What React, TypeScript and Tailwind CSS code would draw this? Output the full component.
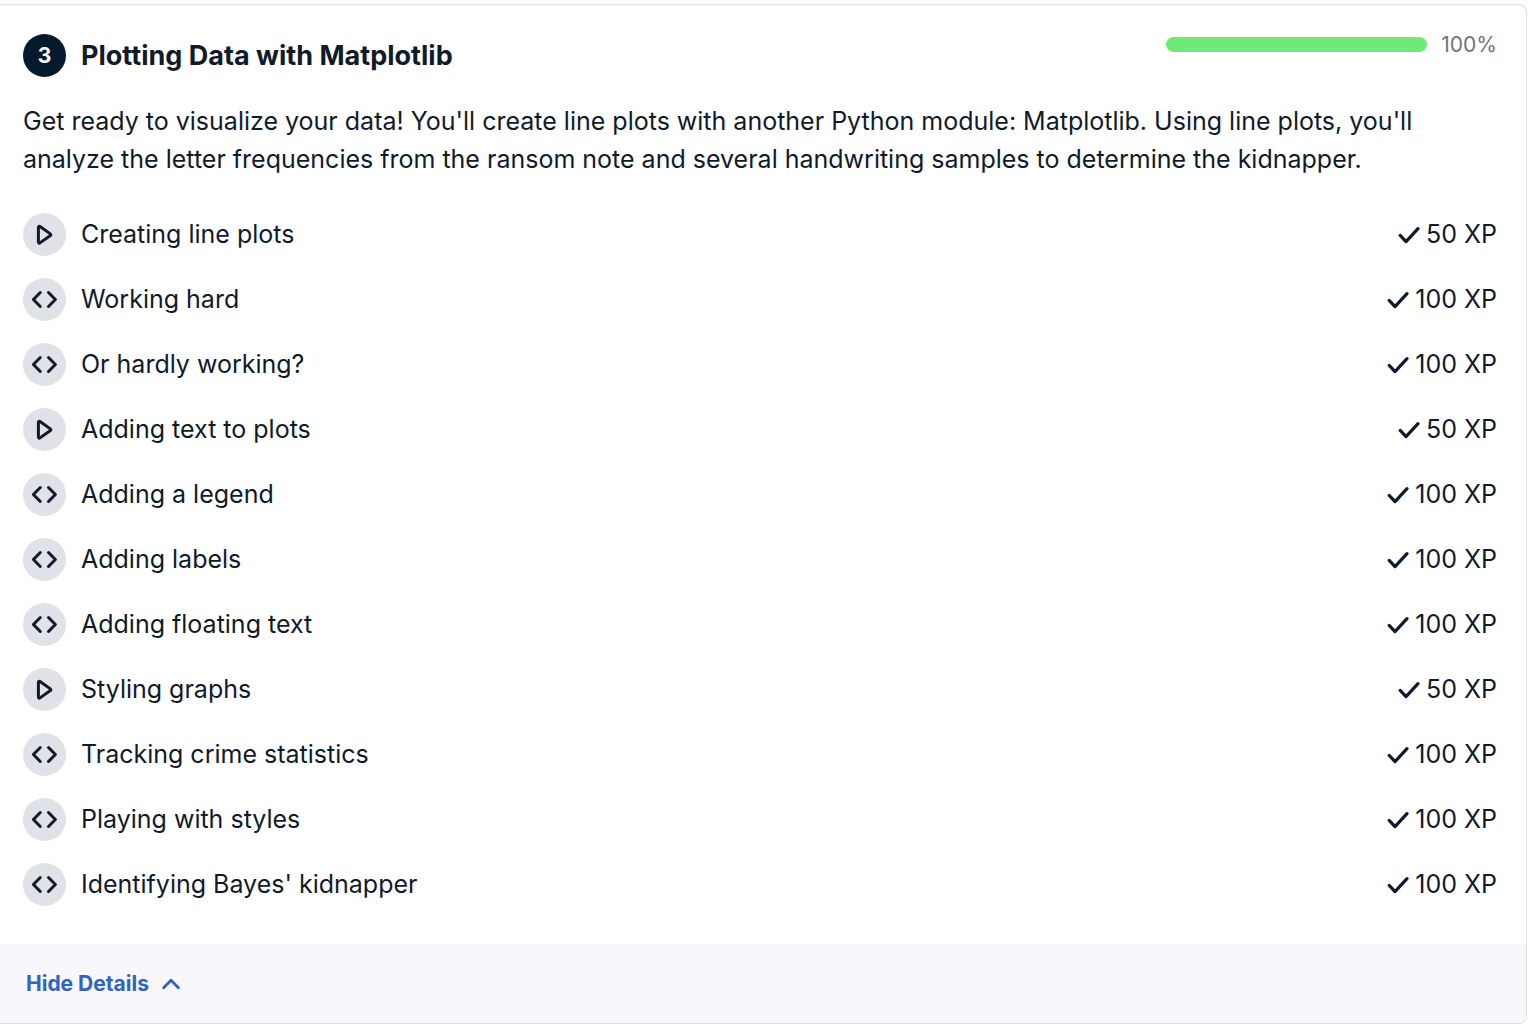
type Exercise = { title: string; kind: "video" | "code"; xp: number };

const exercises: Exercise[] = [
  { title: "Creating line plots", kind: "video", xp: 50 },
  { title: "Working hard", kind: "code", xp: 100 },
  { title: "Or hardly working?", kind: "code", xp: 100 },
  { title: "Adding text to plots", kind: "video", xp: 50 },
  { title: "Adding a legend", kind: "code", xp: 100 },
  { title: "Adding labels", kind: "code", xp: 100 },
  { title: "Adding floating text", kind: "code", xp: 100 },
  { title: "Styling graphs", kind: "video", xp: 50 },
  { title: "Tracking crime statistics", kind: "code", xp: 100 },
  { title: "Playing with styles", kind: "code", xp: 100 },
  { title: "Identifying Bayes' kidnapper", kind: "code", xp: 100 },
];

function PlayIcon() {
  return (
    <svg width="27" height="27" viewBox="0 0 27 27" fill="none" stroke="currentColor" strokeWidth="3" strokeLinejoin="round" aria-hidden="true">
      <path d="M7.4 6.3v14.8c0 .9.9 1.3 1.6.8l10.4-7.4c.6-.4.6-1.2 0-1.6L9 5.5c-.7-.5-1.6-.1-1.6.8Z" />
    </svg>
  );
}

function CodeIcon() {
  return (
    <svg width="27" height="27" viewBox="0 0 27 27" fill="none" stroke="currentColor" strokeWidth="3" strokeLinecap="round" strokeLinejoin="round" aria-hidden="true">
      <path d="m9.3 6.5-6.9 7 6.9 7M17.5 6.5l6.9 7-6.9 7" />
    </svg>
  );
}

function CheckIcon() {
  return (
    <svg width="22" height="22" viewBox="0 0 22 22" fill="none" stroke="currentColor" strokeWidth="3.2" strokeLinecap="round" strokeLinejoin="round" aria-hidden="true">
      <path d="M2.2 11.4 8 17.6 20 4.6" />
    </svg>
  );
}

function ExerciseRow({ title, kind, xp }: Exercise) {
  return (
    <li>
      <a href="#" className="flex items-center justify-between">
        <span className="flex items-center gap-[15px]">
          <span className="flex size-[43px] shrink-0 items-center justify-center rounded-full bg-[#e1e1e8]">
            {kind === "video" ? <PlayIcon /> : <CodeIcon />}
          </span>
          <span>{title}</span>
        </span>
        <span className="flex items-center gap-1.5">
          <CheckIcon />
          {xp} XP
        </span>
      </a>
    </li>
  );
}

export default function App() {
  return (
    <section className="mt-1 mr-[9px] overflow-hidden rounded-r-lg border border-l-0 border-[#e0e0e4] bg-white font-['Inter',sans-serif] text-[25px] text-[#0f1b2b]">
      <div className="pt-[29px] pr-[29px] pb-[38px] pl-[23px]">
        <header className="flex items-start justify-between">
          <div className="flex items-center gap-[15px]">
            <span className="flex size-[43px] items-center justify-center rounded-full bg-[#051a2d] text-[21px] font-bold text-white">3</span>
            <h2 className="text-[27px] leading-8 font-bold">Plotting Data with Matplotlib</h2>
          </div>
          <div className="flex items-center gap-3.5">
            <div role="progressbar" aria-label="Chapter progress" aria-valuenow={100} className="h-[15px] w-[261px] rounded-full bg-[#6eeb77]" />
            <span className="text-[21px] leading-[21px] text-[#6f747c]">100%</span>
          </div>
        </header>
        <p className="mt-[25px] leading-[38px]">
          Get ready to visualize your data! You'll create line plots with another Python module: Matplotlib. Using line plots, you'll
          analyze the letter frequencies from the ransom note and several handwriting samples to determine the kidnapper.
        </p>
        <ul className="mt-[35px] flex flex-col gap-[22px]">
          {exercises.map((exercise) => (
            <ExerciseRow key={exercise.title} {...exercise} />
          ))}
        </ul>
      </div>
      <footer className="bg-[#f7f7fc] px-[26px] py-6">
        <button type="button" className="flex h-[31px] items-center gap-3 text-[21px] font-bold text-[#3263c0]">
          Hide Details
          <svg width="20" height="20" viewBox="0 0 20 20" fill="none" stroke="currentColor" strokeWidth="2.8" strokeLinecap="round" strokeLinejoin="round" aria-hidden="true">
            <path d="M2.6 13.8 10 6.2l7.4 7.6" />
          </svg>
        </button>
      </footer>
    </section>
  );
}
